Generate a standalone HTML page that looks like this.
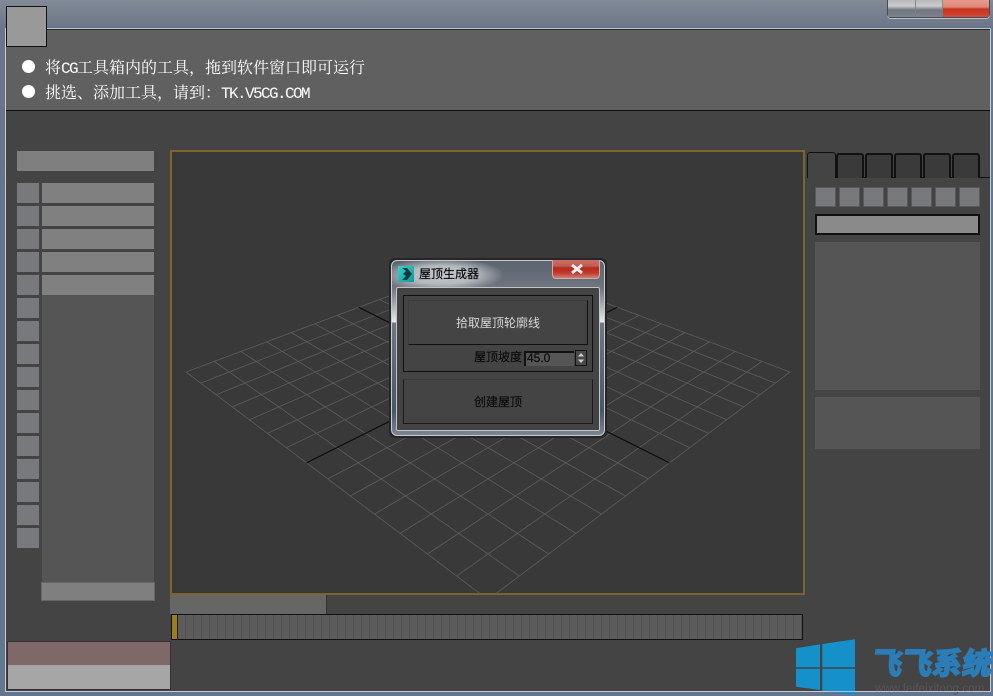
<!DOCTYPE html>
<html lang="zh">
<head>
<meta charset="utf-8">
<title>屋顶生成器</title>
<style>
html,body{margin:0;padding:0;width:993px;height:696px;overflow:hidden;background:#66788e}
div{position:absolute;box-sizing:border-box}
#chrome{left:0;top:0;width:993px;height:696px;background:linear-gradient(180deg,#838a96 0,#6a7688 28px,#64768d 200px,#64768d 100%)}
#client{left:5px;top:28px;width:986px;height:664px;background:#444;border:1px solid #c4ccd4;border-top-color:#b8c0c8}
#client:after{content:"";position:absolute;left:0;top:0;right:0;height:1px;background:#2a2a2a}
#head{left:6px;top:30px;width:984px;height:81px;background:#606060;border-bottom:1px solid #111}
#sq{left:6px;top:6px;width:41px;height:41px;background:#999;border:1px solid #111}
.dot{width:13px;height:13px;border-radius:50%;background:#fff;left:22px}
.ln{left:45px;color:#fff;font:16px/20px "Noto Serif CJK SC","Liberation Serif",serif;white-space:nowrap}
.ln span{font:16px/20px "Liberation Mono",monospace;letter-spacing:-1.6px}
.g{background:#7f7f7f}
.s{background:#77797c;left:17px;width:22px;height:20px}
.b{background:#808080;left:42px;width:112px;height:20px}
.tab{top:153px;width:28px;height:25px;background:#3a3a3a;border:2px solid #111;border-bottom:0;border-radius:3px 3px 0 0}
.ic{top:187px;width:21px;height:20px;background:#77797c;border:1px solid #595959}
.wb{top:0;height:18px}
.di{color:#0c0c0c;font:400 12px/16px "Noto Sans CJK SC","Liberation Sans",sans-serif;white-space:nowrap;-webkit-text-stroke:.2px #0c0c0c}
</style>
</head>
<body>
<div id="chrome"></div>
<div class="wb" style="left:887px;width:103px;border:1px solid #444c56;border-top:0;border-radius:0 0 4px 4px;box-shadow:0 1px 0 #b8bec6"></div>
<div class="wb" style="left:888px;width:27px;height:17px;background:linear-gradient(180deg,#b8b8b8 0,#cccccc 6px,#9a9fa6 8px,#6f7680 10px,#7d848e 100%)"></div>
<div class="wb" style="left:916px;width:26px;height:17px;background:linear-gradient(180deg,#b8b8b8 0,#cccccc 6px,#9a9fa6 8px,#6f7680 10px,#7d848e 100%)"></div>
<div class="wb" style="left:943px;width:46px;height:17px;background:linear-gradient(180deg,#e99a8c 0,#dd8878 7px,#c8321f 9px,#d04a38 100%)"></div>

<div id="client"></div>
<div id="head"></div>
<div id="sq"></div>
<div class="dot" style="top:60px"></div>
<div class="dot" style="top:85px"></div>
<div class="ln" style="top:57px">将<span>CG</span>工具箱内的工具，拖到软件窗口即可运行</div>
<div class="ln" style="top:82px">挑选、添加工具，请到：<span>TK.V5CG.COM</span></div>

<!-- left panel -->
<div class="g" style="left:17px;top:151px;width:137px;height:20px"></div>
<div style="left:42px;top:295px;width:112px;height:287px;background:#555"></div>
<div class="s" style="top:183px"></div><div class="s" style="top:206px"></div><div class="s" style="top:229px"></div><div class="s" style="top:252px"></div>
<div class="s" style="top:275px"></div><div class="s" style="top:298px"></div><div class="s" style="top:321px"></div><div class="s" style="top:344px"></div>
<div class="s" style="top:367px"></div><div class="s" style="top:390px"></div><div class="s" style="top:413px"></div><div class="s" style="top:436px"></div>
<div class="s" style="top:459px"></div><div class="s" style="top:482px"></div><div class="s" style="top:505px"></div><div class="s" style="top:528px"></div>
<div class="b" style="top:183px"></div><div class="b" style="top:206px"></div><div class="b" style="top:229px"></div><div class="b" style="top:252px"></div><div class="b" style="top:275px"></div>
<div class="g" style="left:41px;top:582px;width:114px;height:19px;border:1px solid #666"></div>

<!-- viewport -->
<div style="left:170px;top:150px;width:635px;height:445px;background:#393939;border:2px solid #7a6430"></div>
<svg width="993" height="696" style="position:absolute;left:0;top:0">
<defs><clipPath id="vp"><rect x="172" y="152" width="631" height="441"/></clipPath></defs>
<g clip-path="url(#vp)" fill="none">
<g id="gr" stroke="#5c5c5c" stroke-width="0.8">
<path d="M186 372L488 258.8M200.7 383.1L504.5 265M216.1 394.7L521.5 271.4M232.3 406.9L539.2 278M249.4 419.8L557.6 284.9M267.4 433.4L576.7 292.1M286.4 447.7L596.6 299.5M327.8 478.9L638.9 315.4M350.4 496L661.3 323.8M374.5 514.1L684.8 332.6M400.1 533.4L709.4 341.8M427.4 554L735 351.4M456.6 576.1L761.8 361.5M488 599.7L790 372"/>
</g>
<use href="#gr" transform="translate(976,0) scale(-1,1)"/>
<path d="M306.5 462.9L617.3 307.3M669.5 462.9L358.7 307.3" stroke="#0a0a0a" stroke-width="1.1"/>
</g>
</svg>

<!-- time slider -->
<div style="left:170px;top:595px;width:157px;height:19px;background:#666;border-right:1px solid #333"></div>
<div style="left:171px;top:614px;width:632px;height:26px;border:1px solid #111;background:repeating-linear-gradient(90deg,#5c5c5c 0,#5c5c5c 7px,#505050 7px,#505050 8px);background-position:6px 0"></div>
<div style="left:172px;top:615px;width:6px;height:24px;background:#9c7c20;border-right:1px solid #222"></div>

<!-- status swatch -->
<div style="left:7px;top:641px;width:164px;height:49px;border:1px solid #333;background:linear-gradient(180deg,#7f6868 0,#7f6868 23px,#a6a6a6 23px,#a6a6a6 100%)"></div>

<!-- right tabs -->
<div style="left:836px;top:177px;width:154px;height:1px;background:#111"></div>
<div class="tab" style="left:807px;top:152px;width:29px;height:26px;background:#444;border-width:1px;border-bottom:0;border-color:#111"></div>
<div class="tab" style="left:836px"></div><div class="tab" style="left:865px"></div><div class="tab" style="left:894px"></div><div class="tab" style="left:923px"></div><div class="tab" style="left:952px"></div>
<div class="ic" style="left:815px"></div><div class="ic" style="left:839px"></div><div class="ic" style="left:863px"></div><div class="ic" style="left:887px"></div><div class="ic" style="left:911px"></div><div class="ic" style="left:935px"></div><div class="ic" style="left:959px"></div>
<div style="left:815px;top:214px;width:165px;height:21px;background:#8a8a8a;border:2px solid #111"></div>
<div style="left:815px;top:242px;width:165px;height:148px;background:#555"></div>
<div style="left:815px;top:397px;width:165px;height:52px;background:#555"></div>

<!-- dialog -->
<div style="left:389px;top:258px;width:218px;height:180px;background:#262626;border-radius:6px"></div>
<div style="left:391px;top:260px;width:214px;height:176px;border:1px solid #c8ccd0;border-radius:6px;overflow:hidden;background:linear-gradient(180deg,#5c6470 0,#6e757f 27px,#9a9fa5 40px,#eaeaea 61px,#6f7783 62px,#5a6676 110px,#48566a 150px,#7f8a96 176px)">
  <div style="left:0;top:0;width:212px;height:28px;background:radial-gradient(ellipse 62px 17px at 50px 14px,#c4c8cc 0,#b4b9be 55%,rgba(120,128,138,0) 100%)"></div>
</div>
<div style="left:396px;top:287px;width:204px;height:144px;background:#444;border:1px solid #c0c4c8;border-radius:2px"></div>
<div style="left:398px;top:266px;width:16px;height:16px;background:linear-gradient(135deg,#3ad0c8,#0f9a9a)"></div>
<svg width="16" height="16" style="position:absolute;left:398px;top:266px"><path d="M4 2H9L14 8L9 14H4L8 10L5 8L8 5Z" fill="#0a3a40"/></svg>
<div class="di" style="left:419px;top:266px;color:#05050c">屋顶生成器</div>
<div style="left:552px;top:260px;width:48px;height:19px;border:1px solid #d8a8a0;border-top:0;border-radius:0 0 4px 4px;background:linear-gradient(180deg,#c9716a 0,#c25c52 6px,#b52a1c 8px,#c03a2c 13px,#c9827a 18px)"></div>
<svg width="16" height="12" style="position:absolute;left:569px;top:263px"><path d="M3 2L13 10M13 2L3 10" stroke="#f2f2f2" stroke-width="3"/></svg>

<div style="left:403px;top:295px;width:190px;height:77px;border:1px solid #111"></div>
<div style="left:408px;top:300px;width:180px;height:45px;background:#444;border:1px solid #3d3d3d;border-right-color:#111;border-bottom-color:#111"></div>
<div class="di" style="left:456px;top:315px;color:#d8d8d8;-webkit-text-stroke:0">拾取屋顶轮廓线</div>
<div class="di" style="left:474px;top:349px">屋顶坡度</div>
<div style="left:524px;top:351px;width:50px;height:15px;background:#555;border-top:2px solid #111;border-left:2px solid #111"></div>
<div class="di" style="left:527px;top:350px;font-family:'Liberation Sans',sans-serif">45.0</div>
<div style="left:575px;top:350px;width:12px;height:16px;background:#4a4a4a;border:1px solid #111"></div>
<svg width="12" height="16" style="position:absolute;left:575px;top:350px"><path d="M6 3L9 6.5H3Z M3 9.5H9L6 13Z" fill="#cfcfcf"/></svg>
<div style="left:403px;top:379px;width:190px;height:45px;background:#444;border:1px solid #1a1a1a;border-top-color:#3c3c3c"></div>
<div class="di" style="left:474px;top:394px">创建屋顶</div>

<!-- watermark -->
<svg width="993" height="696" style="position:absolute;left:0;top:0">
<path d="M796 648.3L820 644.3V667.3H796Z M822.3 644L855 639.3V667.3H822.3Z M796 668.7H820V690L796 686.7Z M822.3 668.7H855V695L822.3 690.7Z" fill="#1690c8"/>
</svg>
<div style="left:873px;top:641px;width:120px;height:40px;overflow:hidden;color:#2b7db8;font:900 30px/40px 'Noto Sans CJK SC','Liberation Sans',sans-serif;white-space:nowrap;-webkit-text-stroke:1.2px #2b7db8"><span style="display:inline-block;transform:skewX(-8deg)">飞飞系统</span></div>
<div style="left:875px;top:682px;color:#555;font:11.5px/14px 'Liberation Sans',sans-serif;white-space:nowrap;letter-spacing:0.1px">www.feifeixitong.com</div>
<div style="left:5px;top:691px;width:986px;height:1px;background:#c4ccd4;opacity:.85"></div>
</body>
</html>
